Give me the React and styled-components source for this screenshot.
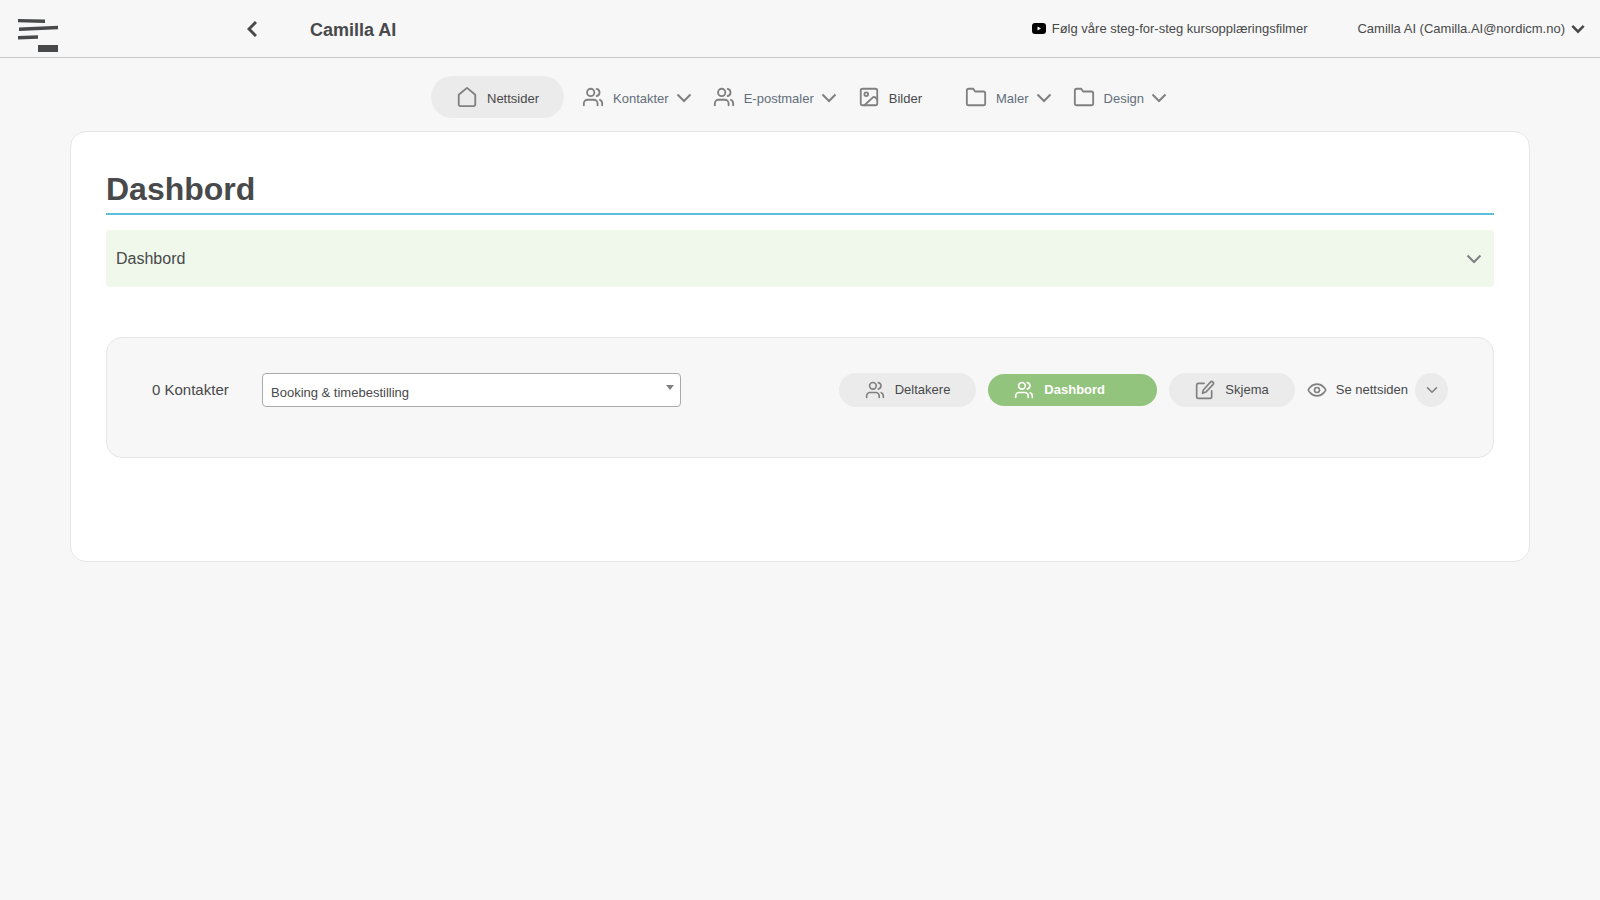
import React from 'react';
import styled, { createGlobalStyle, css } from 'styled-components';

const GlobalStyle = createGlobalStyle`
  * {
    box-sizing: border-box;
  }
  body {
    margin: 0;
    background: #f7f7f7;
    color: #48494a;
    font-family: 'Liberation Sans', Arial, sans-serif;
    font-size: 13px;
    line-height: 20px;
  }
  button, select {
    font: inherit;
    color: inherit;
  }
  a {
    color: inherit;
    text-decoration: none;
  }
`;

const Icon = ({ children, size = 22 }) => (
  <IconSvg width={size} height={size} viewBox="0 0 24 24" aria-hidden="true">
    {children}
  </IconSvg>
);

const HomeIcon = () => (
  <Icon>
    <path d="M3 9.5 12 2l9 7.5V20a2 2 0 0 1-2 2H5a2 2 0 0 1-2-2z" />
  </Icon>
);

const UsersIcon = ({ size }) => (
  <Icon size={size}>
    <path d="M17 21v-2a4 4 0 0 0-4-4H6a4 4 0 0 0-4 4v2" />
    <circle cx="9.5" cy="7" r="4" />
    <path d="M22 21v-2a4 4 0 0 0-2.5-3.8M16 3.1a4 4 0 0 1 0 7.8" />
  </Icon>
);

const ImageIcon = () => (
  <Icon>
    <rect x="3" y="3" width="18" height="18" rx="2" />
    <circle cx="9" cy="9" r="2" />
    <path d="m21 15-2-2.4a2 2 0 0 0-3 0L7 21" />
  </Icon>
);

const FolderIcon = () => (
  <Icon>
    <path d="M22 19a2 2 0 0 1-2 2H4a2 2 0 0 1-2-2V5a2 2 0 0 1 2-2h5l2 3h9a2 2 0 0 1 2 2z" />
  </Icon>
);

const EditIcon = () => (
  <Icon size={20}>
    <path d="M11 4H4a2 2 0 0 0-2 2v14a2 2 0 0 0 2 2h14a2 2 0 0 0 2-2v-7" />
    <path d="M18.5 2.5a2.1 2.1 0 0 1 3 3L13 14.5l-4 1.5 1-4z" />
  </Icon>
);

const EyeIcon = () => (
  <Icon size={20}>
    <path d="M1.500 12s3-7 10.500-7 10.500 7 10.500 7-3 7-10.500 7S1.500 12 1.500 12z" />
    <circle cx="12" cy="12" r="3" />
  </Icon>
);

const Chevron = ({ width = 16, bold }) => (
  <ChevronSvg width={width} height={10} viewBox="0 0 16 10" $bold={bold} aria-hidden="true">
    <path d="M1.5 1.5 8 8l6.5-6.5" />
  </ChevronSvg>
);

const NAV = [
  { label: 'Nettsider', icon: HomeIcon, active: true },
  { label: 'Kontakter', icon: UsersIcon, menu: true },
  { label: 'E-postmaler', icon: UsersIcon, menu: true },
  { label: 'Bilder', icon: ImageIcon },
  { label: 'Maler', icon: FolderIcon, menu: true },
  { label: 'Design', icon: FolderIcon, menu: true },
];

const App = () => {
  const [page, setPage] = React.useState('booking');

  return (
    <>
      <GlobalStyle />
      <Header>
        <LogoLink href="#" aria-label="Hjem">
          <svg width="40" height="35" viewBox="0 0 40 35" fill="#48494a" aria-hidden="true">
            <path d="M0 1l27 .5V5L0 4.300zM1 9.500l39-1.700v3.500L1 13zM0 18l20-.7v3.500L0 21.500zM20 27h20v7H20z" />
          </svg>
        </LogoLink>
        <BackButton type="button" aria-label="Tilbake">
          <svg width="10" height="16" viewBox="0 0 10 16" fill="none" stroke="#48494a" strokeWidth="3" aria-hidden="true">
            <path d="M9 1 2 8l7 7" />
          </svg>
        </BackButton>
        <SiteName>Camilla AI</SiteName>
        <VideoLink href="#">
          <svg width="14" height="12" viewBox="0 0 14 12" aria-hidden="true">
            <rect width="14" height="11" rx="3" />
            <path d="M5.500 3.500v4L9 5.500z" fill="#fff" />
          </svg>
          Følg våre steg-for-steg kursopplæringsfilmer
        </VideoLink>
        <UserButton type="button">
          Camilla AI (Camilla.AI@nordicm.no)
          <Chevron width={14} bold />
        </UserButton>
      </Header>
      <Nav>
        {NAV.map(({ label, icon: NavIcon, active, menu }) => (
          <NavItem
            key={label}
            as={menu ? 'button' : 'a'}
            href={menu ? undefined : '#'}
            $active={active}
            $menu={menu}
          >
            <NavIcon />
            <span>{label}</span>
            {menu && <Chevron />}
          </NavItem>
        ))}
      </Nav>
      <Card>
        <Title>Dashbord</Title>
        <Accordion type="button">
          Dashbord
          <Chevron />
        </Accordion>
        <Panel>
          <label htmlFor="page">0 Kontakter</label>
          <SelectBox>
            <select id="page" value={page} onChange={(e) => setPage(e.target.value)}>
              <option value="booking">Booking &amp; timebestilling</option>
            </select>
          </SelectBox>
          <Actions>
            <Pill type="button">
              <UsersIcon size={20} />
              Deltakere
            </Pill>
            <Pill type="button" $active>
              <UsersIcon size={20} />
              Dashbord
            </Pill>
            <Pill type="button">
              <EditIcon />
              Skjema
            </Pill>
            <ViewGroup>
              <ViewLink href="#">
                <EyeIcon />
                Se nettsiden
              </ViewLink>
              <RoundButton type="button" aria-label="Flere valg">
                <Chevron width={12} />
              </RoundButton>
            </ViewGroup>
          </Actions>
        </Panel>
      </Card>
    </>
  );
};

const IconSvg = styled.svg`
  flex: none;
  fill: none;
  stroke: currentColor;
  stroke-width: 2;
  stroke-linecap: round;
  stroke-linejoin: round;
  color: #808080;
`;

const ChevronSvg = styled.svg`
  flex: none;
  fill: none;
  stroke: ${({ $bold }) => ($bold ? '#48494a' : '#808080')};
  stroke-width: ${({ $bold }) => ($bold ? 3 : 2)};
`;

const Header = styled.header`
  height: 58px;
  display: flex;
  align-items: center;
  padding: 0 15px 0 18px;
  border-bottom: 1px solid #c8c8c8;
`;

const LogoLink = styled.a`
  width: 229px;
  padding-top: 14px;

  svg {
    display: block;
  }
`;

const BackButton = styled.button`
  display: flex;
  padding: 0;
  border: 0;
  background: none;
`;

const SiteName = styled.div`
  margin: 2px auto 0 53px;
  font-size: 18px;
  font-weight: 700;
`;

const VideoLink = styled.a`
  display: flex;
  align-items: center;
  gap: 6px;
`;

const UserButton = styled.button`
  display: flex;
  align-items: center;
  gap: 6px;
  margin-left: 50px;
  padding: 0;
  border: 0;
  background: none;
`;

const Nav = styled.nav`
  display: flex;
  justify-content: center;
  padding: 18px 0 13px;
`;

const NavItem = styled.a`
  height: 42px;
  display: flex;
  align-items: center;
  padding: 0 11px 0 10px;
  border: 0;
  border-radius: 21px;
  background: none;

  span {
    margin: 4px 0 0 9px;
  }
  ${ChevronSvg} {
    margin: 2px 0 0 7px;
  }
  &:last-child {
    padding-right: 2px;
  }
  ${({ $menu }) =>
    $menu &&
    css`
      color: #636e7b;
    `}
  ${({ $menu, $active }) =>
    !$menu &&
    !$active &&
    css`
      padding-right: 33px;
    `}
  ${({ $active }) =>
    $active &&
    css`
      margin-right: 8px;
      padding: 0 25px;
      background: #ebebeb;
    `}
`;

const Card = styled.main`
  min-height: 431px;
  margin: 0 70px;
  padding: 35px;
  border: 1px solid #e6e6e9;
  border-radius: 16px;
  background: #fff;
`;

const Title = styled.h1`
  margin: 0 0 15px;
  padding-bottom: 2px;
  border-bottom: 2px solid #5bc0de;
  font-size: 32px;
  line-height: 44px;
  font-weight: 700;
`;

const Accordion = styled.button`
  width: 100%;
  height: 57px;
  display: flex;
  align-items: center;
  justify-content: space-between;
  padding: 0 12px 0 10px;
  border: 0;
  border-radius: 4px;
  background: #f0f8ec;
  font-size: 16px;
`;

const Panel = styled.section`
  min-height: 121px;
  display: flex;
  align-items: flex-start;
  margin-top: 50px;
  padding: 35px 45px;
  border: 1px solid #e6e6e9;
  border-radius: 16px;
  background: #f7f7f7;

  label {
    width: 110px;
    font-size: 15px;
    line-height: 34px;
  }
`;

const SelectBox = styled.div`
  width: 419px;
  position: relative;

  select {
    width: 100%;
    height: 34px;
    display: block;
    padding: 6px 8px 0;
    appearance: none;
    border: 1px solid #aaa;
    border-radius: 4px;
    background: #fff;
  }
  &::after {
    content: '';
    position: absolute;
    top: 12px;
    right: 7px;
    border: 4px solid transparent;
    border-top: 5px solid #808080;
    border-bottom: 0;
    pointer-events: none;
  }
`;

const Actions = styled.div`
  display: flex;
  align-items: center;
  gap: 12px;
  margin-left: auto;
`;

const Pill = styled.button`
  height: 34px;
  display: flex;
  align-items: center;
  gap: 10px;
  padding: 0 26px;
  border: 0;
  border-radius: 17px;
  background: #ebebeb;

  ${({ $active }) =>
    $active &&
    css`
      height: 32px;
      width: 169px;
      background: #93c47d;
      color: #fff;
      font-weight: 700;

      ${IconSvg} {
        color: #fff;
      }
    `}
`;

const ViewGroup = styled.div`
  display: flex;
  align-items: center;
  gap: 7px;
`;

const ViewLink = styled.a`
  display: flex;
  align-items: center;
  gap: 9px;
`;

const RoundButton = styled.button`
  width: 33px;
  height: 34px;
  display: flex;
  align-items: center;
  justify-content: center;
  padding: 0;
  border: 0;
  border-radius: 50%;
  background: #ebebeb;
`;

export default App;
